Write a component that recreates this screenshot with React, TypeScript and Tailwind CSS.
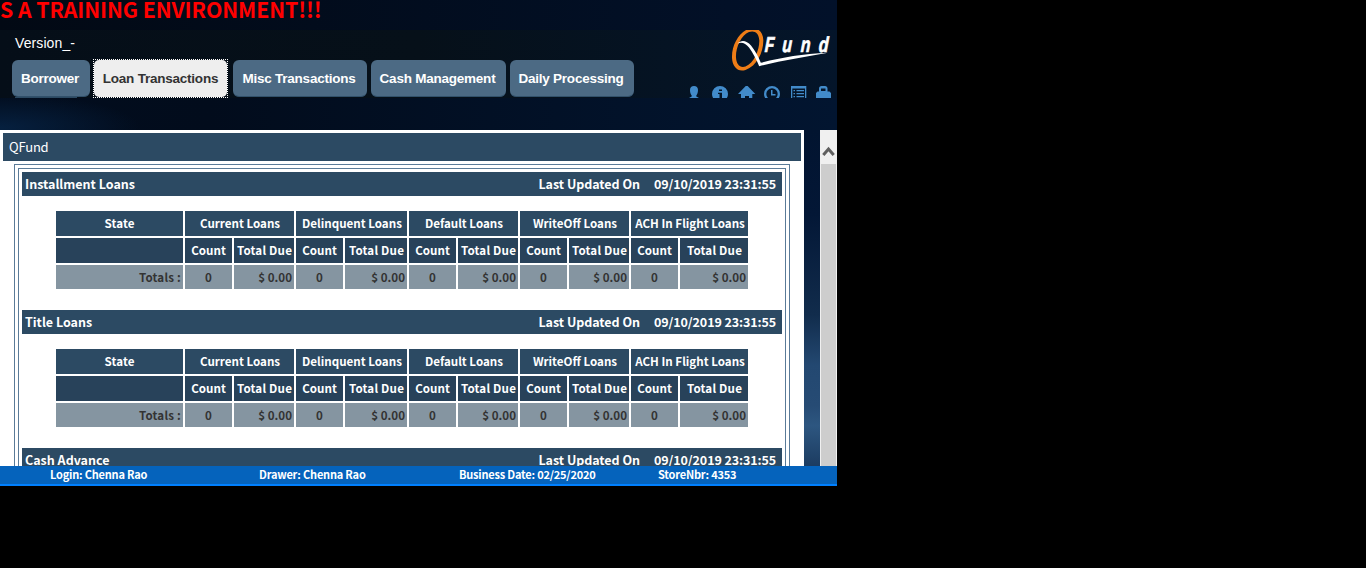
import React from "react";

const NAV = ["Borrower", "Loan Transactions", "Misc Transactions", "Cash Management", "Daily Processing"];
const NAV_WIDTHS = ["w-[78px]", "w-[135px]", "w-[134px]", "w-[135px]", "w-[124px]"];

const GROUPS = ["Current Loans", "Delinquent Loans", "Default Loans", "WriteOff Loans", "ACH In Flight Loans"];

function Logo() {
  return (
    <svg className="block" width="106" height="42" viewBox="730 30 106 42">
      <path
        fillRule="evenodd"
        fill="#ee7d17"
        d="M747 29.5C755 25.5 763 30 763.3 40C763.6 52 757 66 745.5 70C738 72.500 732.500 67 732 58C731.500 46 738 34 747 29.500ZM749 32C741 35 735.500 48 736 57.500C736.300 64 740 68.500 745.500 66.500C754 63 759.500 50 759.300 40.500C759 33 754.500 30 749 32Z"
      />
      <path
        fill="#fff"
        d="M737.500 43.500C741 39.500 746.500 40 751 45.500C755 50.500 758.500 57 760.800 62.800C782 57.500 802 53.800 828 52.800C804 57 782 60.500 759.200 66.200C756.500 59.500 753 53 749 47.500C745.500 43 741.500 41.800 737.500 43.500Z"
      />
      <g fill="#fff" stroke="#fff" strokeWidth=".7" fontFamily="Liberation Sans" fontWeight="700" fontStyle="italic" fontSize="21.500">
        <text transform="translate(764.500 51.500) skewX(-3) scale(.72 1)">F</text>
        <text transform="translate(782 51.500) skewX(-3) scale(.74 1)">u</text>
        <text transform="translate(800.500 51.500) skewX(-3) scale(.74 1)">n</text>
        <text transform="translate(818.500 51.500) skewX(-3) scale(.74 1)">d</text>
      </g>
    </svg>
  );
}

function Toolbar() {
  return (
    <svg className="block" width="145" height="12" viewBox="688 86 145 12" fill="#428bca">
      <path d="M690 90C690 87.300 691.500 86 694 86C696.500 86 698 87.300 698 90C698 92.500 697.300 94.500 696.300 95.500V96.500L699 98H689L691.700 96.500V95.500C690.700 94.500 690 92.500 690 90Z" />
      <path fillRule="evenodd" d="M720 86A8 8 0 1 1 720 102A8 8 0 0 1 720 86ZM719 89.500V91H722V89.500ZM718 92.800V94H719.500V98H722V92.800Z" />
      <path d="M746.700 85L755.300 94H752.300V98H749V96H745V98H741V94H738Z" />
      <path fillRule="evenodd" d="M772 86A8 8 0 1 1 772 102A8 8 0 0 1 772 86ZM772 88.300A5.700 5.700 0 1 0 772 99.700A5.700 5.700 0 0 0 772 88.300ZM771 90H772.500V94H775.500V95.500H771Z" />
      <path fillRule="evenodd" d="M791 86H806.300V100H791ZM792.300 88.500V100H805V88.500ZM793.500 90H795V91.200H793.500ZM796.500 90H804V91.200H796.500ZM793.500 93H795V94.200H793.500ZM796.500 93H804V94.200H796.500ZM793.500 96H795V97.200H793.500ZM796.500 96H804V97.200H796.500Z" />
      <path fillRule="evenodd" d="M819 91.500V88.500C819 87 820 86 821.500 86H825C826.500 86 827.500 87 827.500 88.500V91.500H829.500L831 93V98H816V93L817.500 91.500ZM821 91H825.500V88.500H821Z" />
    </svg>
  );
}

function Section({ title }: { title: string }) {
  return (
    <section className="h-[138px]">
      <div className="flex h-6 items-center bg-[#2c4a63] pl-[3px] pr-[6px] text-[12.5px] font-bold leading-6 text-white">
        <span className="flex-1">{title}</span>
        <span className="mr-[14px] tracking-[-0.03px]">Last Updated On</span>
        <span className="tracking-[-0.1px]">09/10/2019 23:31:55</span>
      </div>
      <div className="ml-[34px] mt-[15px] grid w-[692px] grid-cols-[127px_47px_60px_47px_62px_47px_60px_47px_60px_47px_68px] grid-rows-[25px_25px_24px] gap-[2px] whitespace-nowrap text-center text-[11.6px] font-bold leading-[24px] text-white">
        <div className="bg-[#2c4a63] tracking-[0.1px]">State</div>
        {GROUPS.map((g) => (
          <div key={g} className="col-span-2 flex justify-center bg-[#2c4a63] pl-px">{g}</div>
        ))}
        <div className="bg-[#28425a]" />
        {GROUPS.map((g) => (
          <React.Fragment key={g}>
            <div className="flex justify-center bg-[#28425a]">Count</div>
            <div className="flex justify-center bg-[#28425a] pl-px tracking-[0.2px]">Total Due</div>
          </React.Fragment>
        ))}
        <div className="bg-[#8595a1] pr-[2px] text-right tracking-[0.2px] text-[#333]">Totals :</div>
        {GROUPS.map((g) => (
          <React.Fragment key={g}>
            <div className="bg-[#8595a1] text-[#333]">0</div>
            <div className="bg-[#8595a1] pr-[2px] text-right text-[#333]">$ 0.00</div>
          </React.Fragment>
        ))}
      </div>
    </section>
  );
}

export default function App() {
  return (
    <div className="h-[568px] w-full overflow-hidden bg-black font-['Noto_Sans_CJK_SC',sans-serif]">
      <div className="flex h-[486px] w-[837px] flex-col overflow-hidden bg-[#020b1c]">
        <div className="h-[30px] shrink-0 overflow-hidden whitespace-nowrap bg-linear-to-r from-[#020914] to-[#02112a] text-[21.3px] font-bold leading-[18px] tracking-[-0.1px] text-[#ff0000]">
          S A TRAINING ENVIRONMENT!!!
        </div>
        <header className="flex h-[68px] shrink-0 justify-between overflow-hidden bg-linear-to-r from-[#050e18] via-[#061019] to-[#04152a] font-['Liberation_Sans',sans-serif]">
          <div className="pl-3">
            <div className="h-[30px] pl-[3px] pt-[3px] text-[14px] leading-5 tracking-[0.1px] text-white">Version_-</div>
            <nav className="flex h-[37px] whitespace-nowrap text-[13.5px] font-bold leading-[37px] tracking-[-0.23px] text-white">
              {NAV.map((label, i) => (
                <div
                  key={label}
                  className={
                    i === 1
                      ? `${NAV_WIDTHS[i]} -mt-px ml-[3px] mr-[5px] h-[39px] border border-dotted border-white`
                      : `${NAV_WIDTHS[i]} ${i > 2 ? "ml-1" : ""} flex justify-center rounded-[6px] border-b border-[#31506a] bg-[#4c6a84] pr-[2px]`
                  }
                >
                  {i === 1 ? (
                    <div className="h-full rounded-[5px] bg-[#eee] text-center text-[#333]">{label}</div>
                  ) : (
                    label
                  )}
                </div>
              ))}
            </nav>
            <div className="flex h-px">
              <div className="ml-[3px] w-[62px] bg-[#2c4a63]" />
            </div>
          </div>
          <div className="flex w-[149px] flex-col">
            <div className="ml-[42px] h-14"><Logo /></div>
            <Toolbar />
          </div>
        </header>
        <div className="h-8 shrink-0 bg-[radial-gradient(ellipse_140px_34px_at_0px_30px,#06203f,transparent),linear-gradient(to_right,#020d1e,#020c1c_25%,#021530)]" />
        <div className="flex h-[336px] shrink-0 overflow-hidden">
          <main className="w-[804px] bg-white px-[3px] pt-[3px]">
            <div className="h-7 bg-[#2c4a63] pl-[6px] text-[13px] leading-7 tracking-[-0.2px] text-white">QFund</div>
            <div className="ml-[11px] mt-[3px] w-[776px] border border-[#5a7b98] p-[3px]">
              <div className="border border-[#5a7b98] p-[3px]">
                <Section title="Installment Loans" />
                <Section title="Title Loans" />
                <Section title="Cash Advance" />
              </div>
            </div>
          </main>
          <div className="w-4 bg-[linear-gradient(to_bottom,#021430_0%,#031736_25%,#112c4c_55%,#234871_70%,#264b74_82%,#2d5680_88%,#1c3c61_100%)]" />
          <div className="flex w-[17px] flex-col bg-[#f0f0f0]">
            <svg className="block h-[34px] w-[17px]" viewBox="0 0 17 34">
              <path d="M3.300 25L8.500 19L13.700 25" fill="none" stroke="#606060" strokeWidth="3" />
            </svg>
            <div className="mx-px flex-1 bg-[#cdcdcd]" />
          </div>
        </div>
        <footer className="flex h-5 shrink-0 whitespace-nowrap border-b-2 border-[#0080ff] bg-[#0563bc] pl-[50px] text-[11px] font-bold leading-[17px] tracking-[-0.2px] text-white">
          <span className="w-[209px]">Login: Chenna Rao</span>
          <span className="w-[200px]">Drawer: Chenna Rao</span>
          <span className="w-[199px]">Business Date: 02/25/2020</span>
          <span>StoreNbr: 4353</span>
        </footer>
      </div>
    </div>
  );
}
